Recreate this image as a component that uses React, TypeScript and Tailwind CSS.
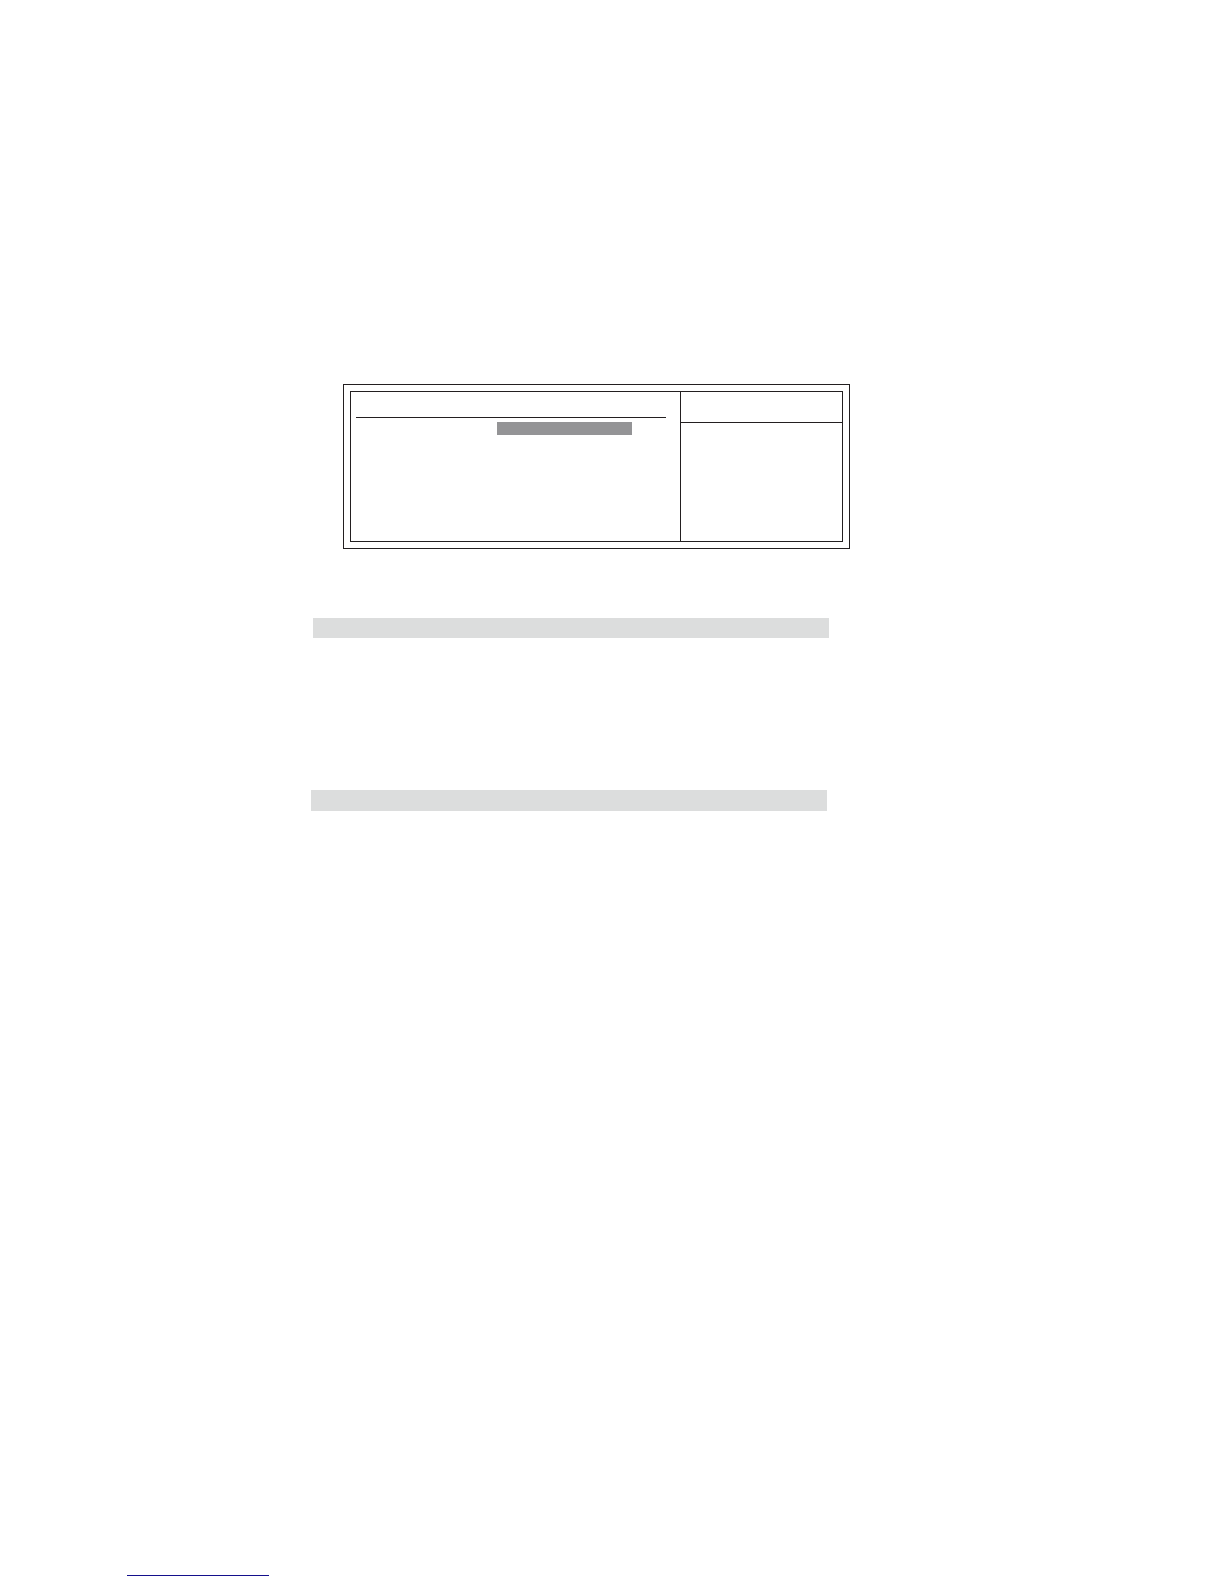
function SetupPanel() {
  return (
    <section className="ml-8 w-full max-w-[507px] border border-[#231f20] p-1.5">
      <div className="flex min-h-[151px] border border-[#231f20]">
        <div className="flex-1 pl-[5px] pr-3.5">
          <div className="h-[26px] border-b border-[#231f20]" />
          <div className="flex pt-1">
            <div className="w-[141px]" />
            <div className="h-[13px] w-[135px] bg-[#949496]" />
          </div>
        </div>
        <aside className="w-[162px] border-l border-[#231f20]">
          <div className="h-[31px] border-b border-[#231f20]" />
        </aside>
      </div>
    </section>
  )
}

export default function App() {
  return (
    <div className="flex min-h-screen flex-col bg-white px-[127px] pb-2 pt-96">
      <main className="ml-[184px]">
        <SetupPanel />
        <div className="ml-0.5 mt-[69px] h-5 w-full max-w-[516px] bg-[#dcdddd]" />
        <div className="mt-[152px] h-[21px] w-full max-w-[516px] bg-[#dcdddd]" />
      </main>
      <footer className="mt-auto">
        <div className="h-px w-[142px] bg-[#14108c]" />
      </footer>
    </div>
  )
}
